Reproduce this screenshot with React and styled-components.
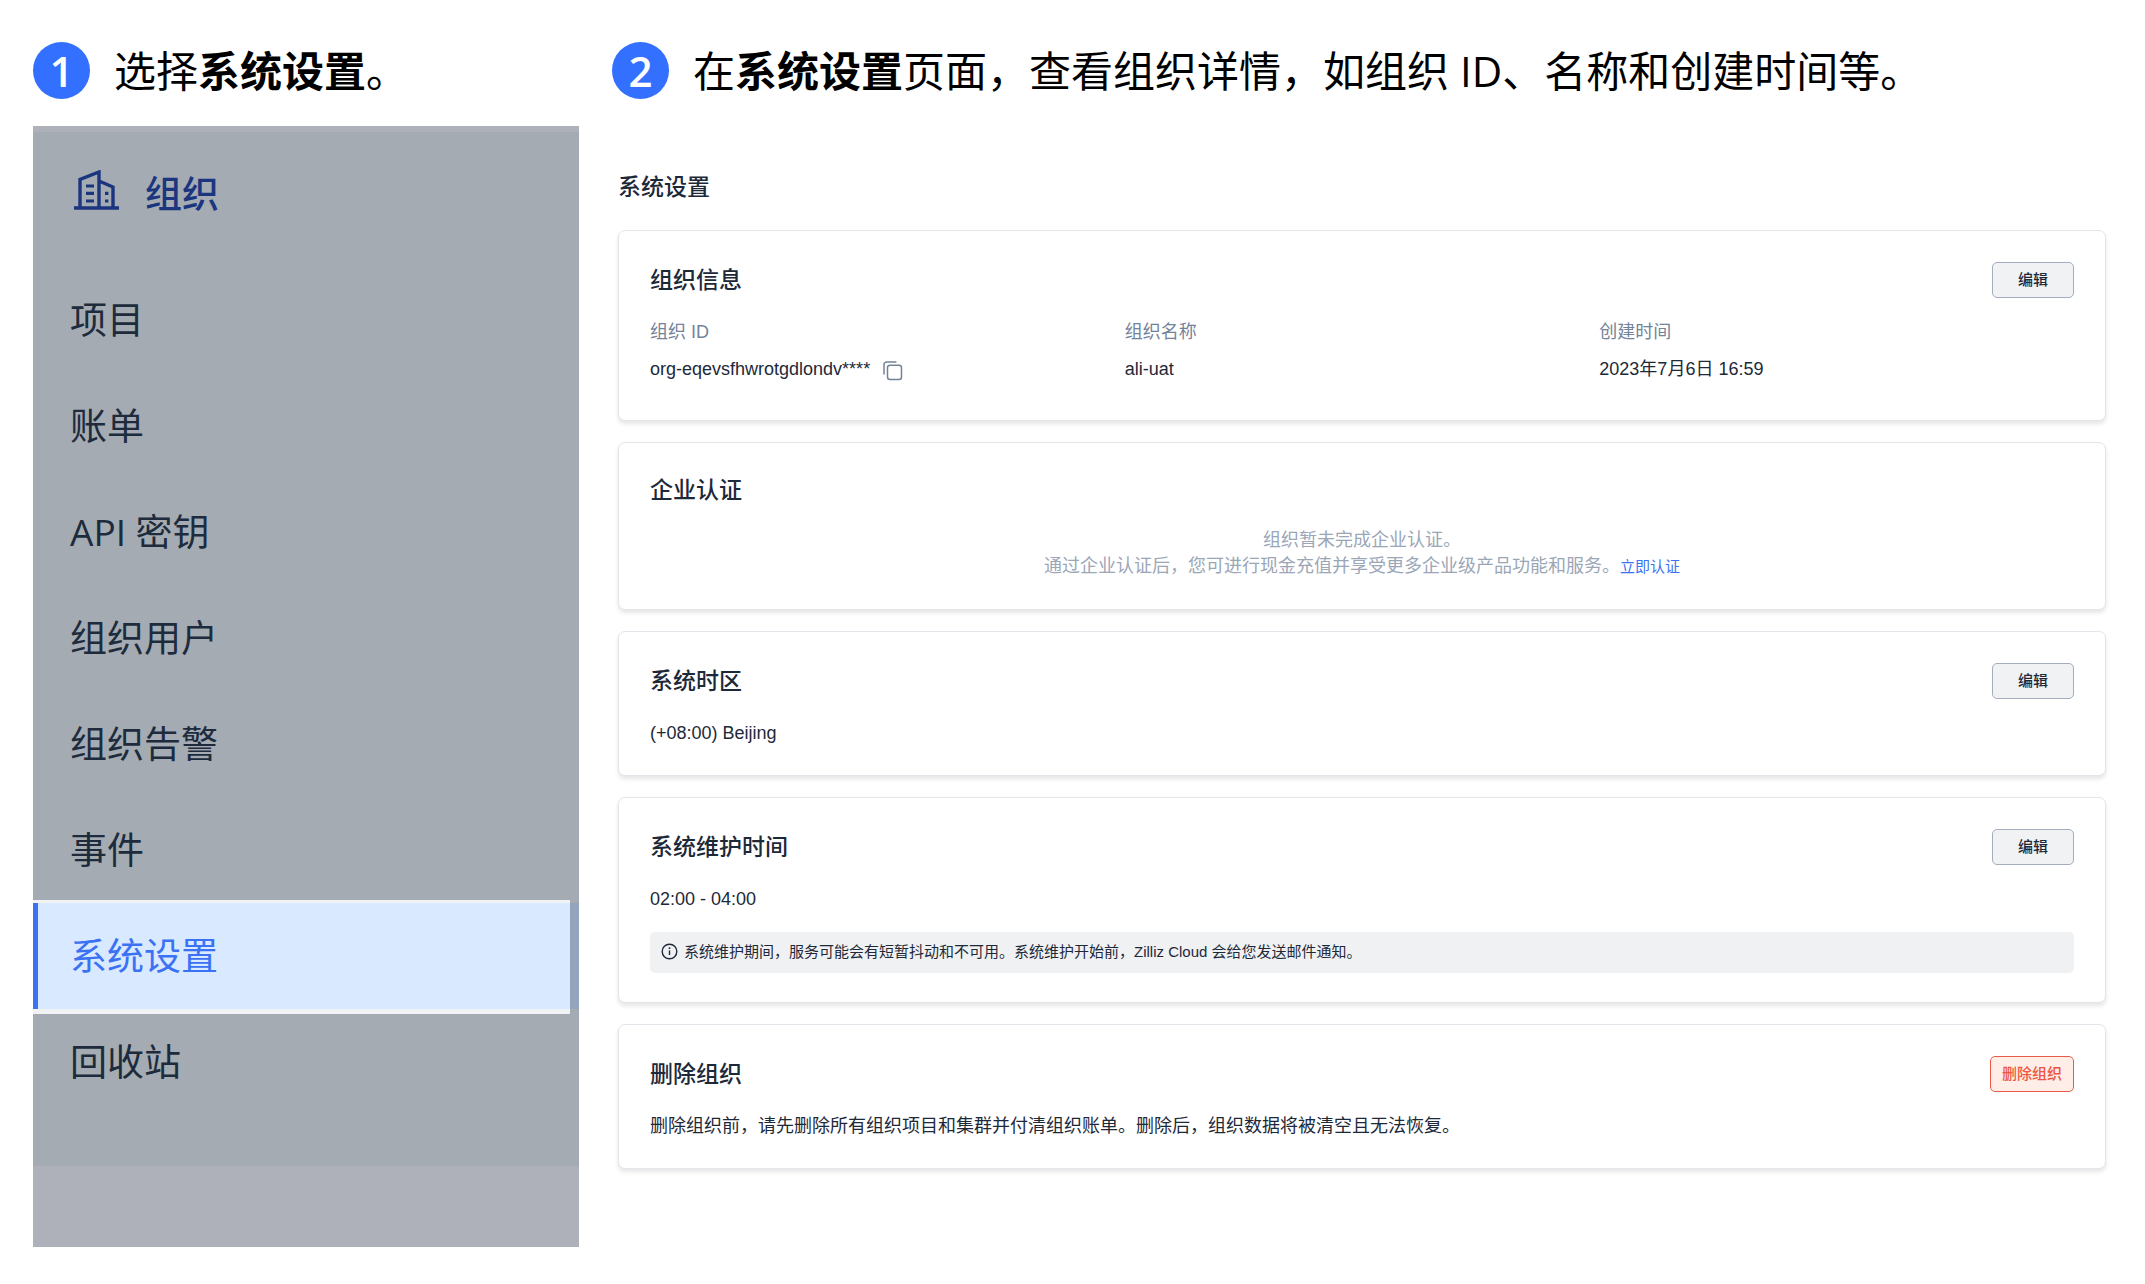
import React from 'react';
import styled, { createGlobalStyle } from 'styled-components';

const menuItems = [
	'项目',
	'账单',
	'API 密钥',
	'组织用户',
	'组织告警',
	'事件',
	'系统设置',
	'回收站',
];

const activeItem = '系统设置';

const BuildingIcon = () => (
	<svg width='46' height='44' viewBox='0 0 46 44' fill='none' aria-hidden='true'>
		<path
			d='M0 38H45M6 38V9.5L25 2V38M25 11L39 17V38'
			stroke='currentColor'
			strokeWidth='3.4'
		/>
		<path
			d='M12 16H20M12 23.3H20M12 31H20M31 23.3H34.4M31 31H34.4'
			stroke='currentColor'
			strokeWidth='3.2'
		/>
	</svg>
);

const CopyIcon = () => (
	<svg width='20' height='20' viewBox='0 0 20 20' fill='none' aria-hidden='true'>
		<rect
			x='4.5'
			y='4.2'
			width='14'
			height='14.4'
			rx='2.5'
			stroke='currentColor'
			strokeWidth='1.5'
		/>
		<path
			d='M1 13.6V3.7A2.7 2.7 0 0 1 3.7 1H13.4'
			stroke='currentColor'
			strokeWidth='1.5'
		/>
	</svg>
);

const InfoIcon = () => (
	<svg width='17' height='17' viewBox='0 0 17 17' fill='none' aria-hidden='true'>
		<circle cx='8.5' cy='8.5' r='7.3' stroke='currentColor' strokeWidth='1.4' />
		<path d='M8.5 7.4V12' stroke='currentColor' strokeWidth='1.4' />
		<circle cx='8.5' cy='5.2' r='0.9' fill='currentColor' />
	</svg>
);

const Section = ({ title, action, children }) => (
	<Card>
		<CardHeader>
			<CardTitle>{title}</CardTitle>
			{action}
		</CardHeader>
		{children}
	</Card>
);

const App = () => {
	return (
		<>
			<GlobalStyle />
			<Page lang='zh-CN'>
				<Step>
					<StepHeading>
						<StepNumber>1</StepNumber>
						<span>
							选择<strong>系统设置</strong>。
						</span>
					</StepHeading>
					<Sidebar>
						<SidebarHeader>
							<BuildingIcon />
							组织
						</SidebarHeader>
						<Menu>
							{menuItems.map((item) => (
								<MenuItem key={item} $active={item === activeItem}>
									<MenuLink href='#' $active={item === activeItem}>
										{item}
									</MenuLink>
								</MenuItem>
							))}
						</Menu>
						<SidebarFooter />
					</Sidebar>
				</Step>
				<Step>
					<StepHeading>
						<StepNumber>2</StepNumber>
						<span>
							在<strong>系统设置</strong>
							页面，查看组织详情，如组织 ID、名称和创建时间等。
						</span>
					</StepHeading>
					<Settings>
						<SettingsTitle>系统设置</SettingsTitle>
						<Section title='组织信息' action={<Button>编辑</Button>}>
							<InfoGrid>
								<div>
									<InfoLabel>组织 ID</InfoLabel>
									<InfoValue>
										org-eqevsfhwrotgdlondv****
										<CopyButton aria-label='复制'>
											<CopyIcon />
										</CopyButton>
									</InfoValue>
								</div>
								<div>
									<InfoLabel>组织名称</InfoLabel>
									<InfoValue>ali-uat</InfoValue>
								</div>
								<div>
									<InfoLabel>创建时间</InfoLabel>
									<InfoValue>2023年7月6日 16:59</InfoValue>
								</div>
							</InfoGrid>
						</Section>
						<Section title='企业认证'>
							<EmptyText>
								组织暂未完成企业认证。
								<br />
								通过企业认证后，您可进行现金充值并享受更多企业级产品功能和服务。<VerifyLink href='#'>立即认证</VerifyLink>
							</EmptyText>
						</Section>
						<Section title='系统时区' action={<Button>编辑</Button>}>
							<Text>(+08:00) Beijing</Text>
						</Section>
						<Section title='系统维护时间' action={<Button>编辑</Button>}>
							<Text>02:00 - 04:00</Text>
							<Notice>
								<InfoIcon />
								系统维护期间，服务可能会有短暂抖动和不可用。系统维护开始前，Zilliz
								Cloud 会给您发送邮件通知。
							</Notice>
						</Section>
						<Section
							title='删除组织'
							action={<Button $danger>删除组织</Button>}
						>
							<Text>
								删除组织前，请先删除所有组织项目和集群并付清组织账单。删除后，组织数据将被清空且无法恢复。
							</Text>
						</Section>
					</Settings>
				</Step>
			</Page>
		</>
	);
};

const GlobalStyle = createGlobalStyle`
	* {
		box-sizing: border-box;
	}

	body {
		margin: 0;
		background-color: #ffffff;
		color: #1d2939;
		font-family: 'Liberation Sans', 'Noto Sans CJK SC', sans-serif;
	}

	h1, h2, h3, p, ul, dl, dd {
		margin: 0;
		padding: 0;
	}

	a {
		text-decoration: none;
	}

	button {
		font-family: inherit;
		cursor: pointer;
	}
`;

const Page = styled.main`
	display: grid;
	grid-template-columns: 546fr 1494fr;
	gap: 33px;
	padding: 42px 39px 37px 33px;
`;

const Step = styled.section`
	min-width: 0;
`;

const StepHeading = styled.h1`
	display: flex;
	align-items: center;
	gap: 24px;
	margin-bottom: 27px;
	color: #000000;
	font-family: 'Open Sans', 'Noto Sans CJK SC', sans-serif;
	font-size: 42px;
	font-weight: 400;
	line-height: 57px;
`;

const StepNumber = styled.span`
	flex: none;
	width: 57px;
	height: 57px;
	border-radius: 50%;
	background-color: #3370ff;
	color: #ffffff;
	font-weight: 600;
	text-align: center;
`;

const Sidebar = styled.nav`
	border-top: 6px solid #aeb1ba;
	background-color: #a4abb3;
	font-family: 'Open Sans', 'Noto Sans CJK SC', sans-serif;
	font-size: 37px;
`;

const SidebarHeader = styled.h2`
	display: flex;
	align-items: center;
	gap: 25px;
	height: 135px;
	padding: 0 41px 15px;
	color: #1b357f;
	font-size: 37px;
	font-weight: 500;
`;

const Menu = styled.ul`
	padding-bottom: 51px;
	list-style: none;
`;

const MenuItem = styled.li`
	padding-right: 9px;
	background-color: ${({ $active }) => ($active ? '#94a4bc' : 'transparent')};
`;

const MenuLink = styled.a`
	display: block;
	height: 106px;
	padding-left: 32px;
	border-left: 5px solid ${({ $active }) => ($active ? '#3a72f3' : 'transparent')};
	background-color: ${({ $active }) => ($active ? '#d9e9ff' : 'transparent')};
	box-shadow: ${({ $active }) =>
		$active ? '0 -3px 0 #f1f2f4, 0 5px 0 #f1f2f4' : 'none'};
	color: ${({ $active }) => ($active ? '#3a72f3' : '#1d2b3c')};
	line-height: 106px;
`;

const SidebarFooter = styled.div`
	height: 81px;
	background-color: #aeb1ba;
`;

const Settings = styled.div`
	display: flex;
	flex-direction: column;
	gap: 21px;
	padding: 45px 0 0 6px;
`;

const SettingsTitle = styled.h2`
	margin-bottom: 6px;
	font-size: 23px;
	font-weight: 500;
	line-height: 32px;
`;

const Card = styled.section`
	padding: 31px 31px 29px;
	border: 1px solid #e4e5ea;
	border-radius: 7px;
	background-color: #ffffff;
	box-shadow: 0 3px 4px rgba(0, 0, 0, 0.1);
`;

const CardHeader = styled.header`
	display: flex;
	align-items: center;
	justify-content: space-between;
	margin-bottom: 21px;
`;

const CardTitle = styled.h3`
	font-size: 23px;
	font-weight: 500;
	line-height: 32px;
`;

const Button = styled.button`
	min-width: 82px;
	height: 36px;
	padding: 0 11px;
	border: 1px solid ${({ $danger }) => ($danger ? '#ec5a48' : '#a3aebd')};
	border-radius: 5px;
	background-color: ${({ $danger }) => ($danger ? '#ffede8' : '#f0f2f4')};
	color: ${({ $danger }) => ($danger ? '#ec5540' : '#1d2939')};
	font-size: 15px;
	font-weight: 500;
	line-height: 26px;
`;

const InfoGrid = styled.dl`
	display: grid;
	grid-template-columns: repeat(3, 1fr);
	padding-bottom: 9px;
	font-size: 18px;
	line-height: 26px;
`;

const InfoLabel = styled.dt`
	margin-bottom: 11px;
	color: #74839a;
`;

const InfoValue = styled.dd`
	display: flex;
	align-items: center;
	gap: 13px;
`;

const CopyButton = styled.button`
	display: flex;
	padding: 4px 0 0;
	border: none;
	background: none;
	color: #74839a;
`;

const Text = styled.p`
	font-size: 18px;
	line-height: 26px;
`;

const EmptyText = styled(Text)`
	color: #9ba6b7;
	text-align: center;
`;

const VerifyLink = styled.a`
	color: #3a72f3;
	font-size: 15px;
`;

const Notice = styled.p`
	display: flex;
	align-items: center;
	gap: 6px;
	min-height: 41px;
	margin-top: 20px;
	padding: 0 11px 2px;
	border-radius: 5px;
	background-color: #f0f1f3;
	font-size: 15px;
	line-height: 26px;
`;

export default App;
